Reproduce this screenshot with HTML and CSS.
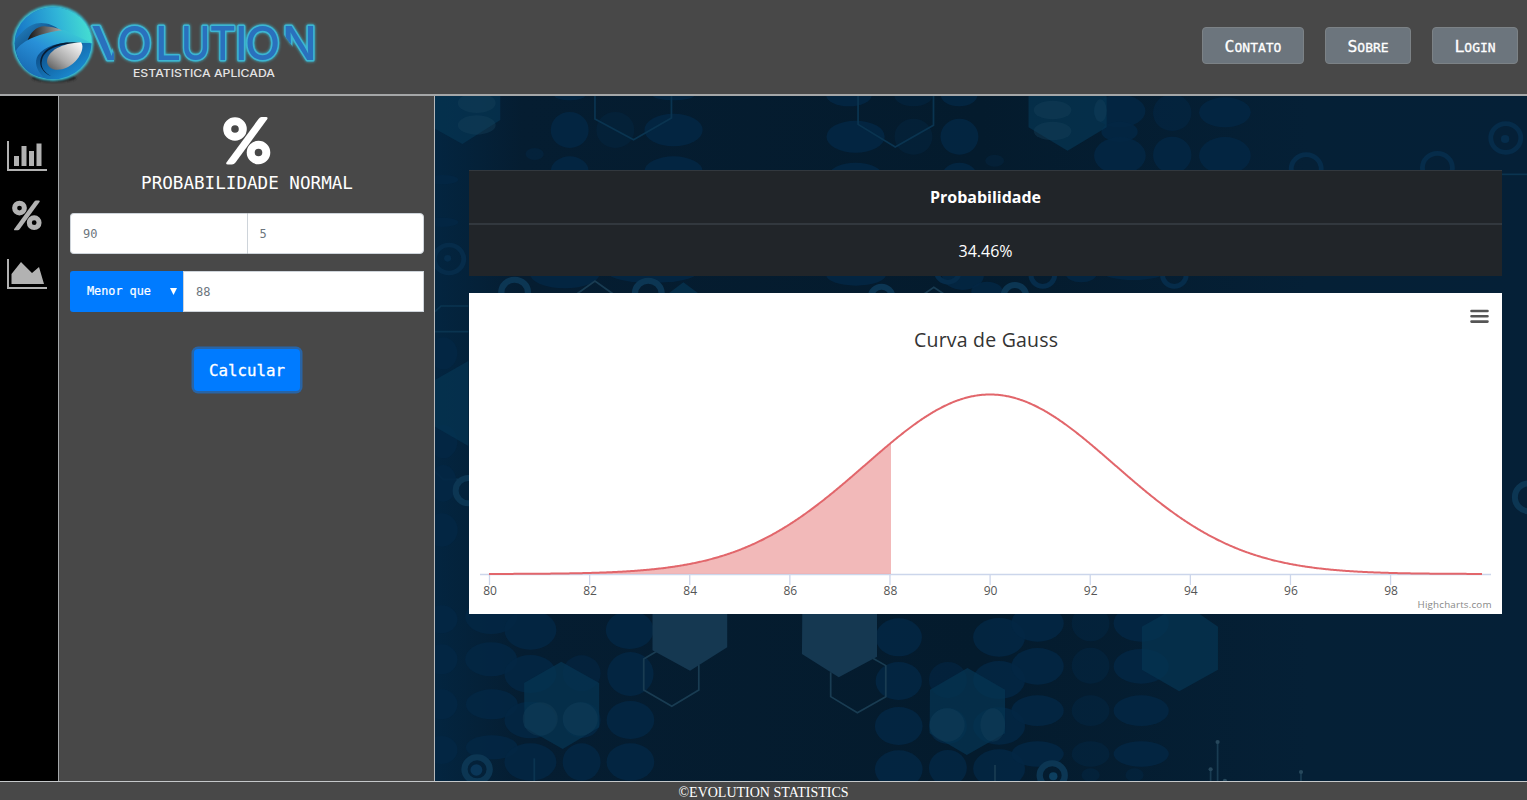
FILE: index.html
```html
<!DOCTYPE html>
<html lang="pt-BR">
<head>
<meta charset="utf-8">
<title>Evolution Statistics</title>
<link rel="stylesheet" href="styles.css">
</head>
<body>
<header class="topbar">
  <svg class="logo" viewBox="0 0 330 94" width="330" height="94">
    <defs>
      <linearGradient id="ballTop" x1="0" y1=".3" x2="1" y2=".2"><stop offset="0" stop-color="#1878c8"/><stop offset=".55" stop-color="#30b4d8"/><stop offset="1" stop-color="#48e4d0"/></linearGradient>
      <linearGradient id="ballLow" x1="0" y1="0" x2=".8" y2="1"><stop offset="0" stop-color="#30a0e0"/><stop offset=".5" stop-color="#0c4a84"/><stop offset="1" stop-color="#1c90d8"/></linearGradient>
      <linearGradient id="band" x1="0" y1="1" x2="1" y2="0"><stop offset="0" stop-color="#1460a8"/><stop offset=".5" stop-color="#2890d8"/><stop offset="1" stop-color="#40dcd4"/></linearGradient>
      <linearGradient id="metal" x1="0" y1="1" x2="1" y2="0"><stop offset="0" stop-color="#555"/><stop offset=".4" stop-color="#aaa"/><stop offset="1" stop-color="#fff"/></linearGradient>
      <linearGradient id="metalTop" x1="0" y1="0" x2="1" y2="0"><stop offset="0" stop-color="#111"/><stop offset="1" stop-color="#bbb"/></linearGradient>
      <filter id="soft" x="-20%" y="-20%" width="140%" height="140%"><feGaussianBlur stdDeviation="1.2"/></filter>
      <clipPath id="clipV"><path d="M86 20h17l11 34v11H86z"/></clipPath>
      <clipPath id="clipN"><path d="M279 20h43v46h-15l-28-38z"/></clipPath>
    </defs>
    <ellipse cx="54" cy="78" rx="22" ry="4" fill="#222" filter="url(#soft)"/>
    <g transform="translate(0 3) scale(1 .935)">
      <circle cx="53" cy="43" r="40.500" fill="#38bfd4" filter="url(#soft)"/>
      <circle cx="53" cy="43" r="38.500" fill="url(#ballLow)"/>
      <path d="M15 43a38.500 38.500 0 0 1 77 0c-10-1-18 0-24 1 0-12-17-26-32-22-10 3-14 10-21 17z" fill="url(#ballTop)"/>
      <path d="M27 42c3-11 10-18 19-17 10 0 17 4 20 8-13 0-27 3-39 9z" fill="url(#metalTop)"/>
      <path d="M16 51c6-11 24-19 48-22l28 14c-24-3-46 0-54 13-4 7-2 16 6 24-15-2-25-13-28-29z" fill="url(#band)"/>
      <path d="M83 43c-20 0-38 4-41 18-2 8 3 14 9 17-14-6-14-22-2-30 10-6 22-7 34-5z" fill="#071c33"/>
      <path d="M47 62c1-11 15-19 34-20 5 7-4 22-14 27-10 5-20 2-20-7z" fill="url(#metal)"/>
    </g>
    <g class="wordmark">
      <g clip-path="url(#clipV)"><text transform="translate(91 60) scale(1.25 1)">V</text></g>
      <text x="117" y="60">O</text>
      <text x="155" y="60">L</text>
      <text transform="translate(181 60) scale(.86 1)">U</text>
      <text transform="translate(209.500 60) scale(.88 1)">T</text>
      <text x="235" y="60">I</text>
      <text x="245" y="60">O</text>
      <g clip-path="url(#clipN)"><text x="282" y="60">N</text></g>
    </g>
    <text class="tagline" x="133" y="76.500" textLength="142" lengthAdjust="spacingAndGlyphs">ESTATISTICA APLICADA</text>
  </svg>
  <nav class="nav">
    <button class="nav-btn">Contato</button>
    <button class="nav-btn">Sobre</button>
    <button class="nav-btn">Login</button>
  </nav>
</header>

<div class="workspace">
  <aside class="rail">
    <svg class="rail-icon" viewBox="0 0 40 31"><path d="M0 0h2v28h38v2H0zM7 15h5v10H7zM14.500 5h5v20h-5zM22 10h5v15h-5zM29.500 2.500h5V25h-5z"/></svg>
    <svg class="rail-icon rail-percent" viewBox="0 0 48 48"><use href="#percent"/></svg>
    <svg class="rail-icon" viewBox="0 0 40 31"><path d="M0 0h2v28h38v2H0zM4.500 15L14 3l11 11 7-6 5 17H4.500z"/></svg>
  </aside>

  <section class="panel">
    <svg class="panel-icon" viewBox="0 0 48 48"><g id="percent"><path d="M38.500 0H43q2.500 0 1 2.500L12.500 45.500Q11 47.500 9 47.500H5q-3 0-1.200-2.500L35.500 2Q37 0 38.500 0z"/><g fill="none" stroke-width="8"><circle cx="12" cy="12" r="7.800"/><circle cx="35.500" cy="35.500" r="7.800"/></g></g></svg>
    <h1 class="panel-title">PROBABILIDADE NORMAL</h1>
    <div class="field-row rounded"><div class="field">90</div><div class="field">5</div></div>
    <div class="field-row"><div class="select">Menor que<svg class="caret" viewBox="0 0 6 6"><path d="M0 0h6L3 6z"/></svg></div><div class="field">88</div></div>
    <button class="calc">Calcular</button>
  </section>

  <main class="results">
    <svg class="backdrop" viewBox="435 96 1092 685" preserveAspectRatio="none">
      <defs>
        <linearGradient id="sea"><stop offset="0" stop-color="#032540"/><stop offset=".08" stop-color="#051d31"/><stop offset=".5" stop-color="#041b2d"/><stop offset=".8" stop-color="#052036"/><stop offset="1" stop-color="#052037"/></linearGradient>
      </defs>
      <path d="M435 96h1092v685H435z" fill="url(#sea)"/>
      <g transform="translate(435 95) scale(.3508 .3333)">
        <g class="dots"><circle cx="384" cy="105" r="54"/><circle cx="514" cy="105" r="54" opacity=".5"/><ellipse cx="680" cy="105" rx="83" ry="49"/><ellipse cx="284" cy="177" rx="26" ry="18" opacity=".6"/><ellipse cx="384" cy="229" rx="54" ry="45"/><ellipse cx="680" cy="229" rx="83" ry="45"/><ellipse cx="384" cy="0" rx="45" ry="16"/><ellipse cx="680" cy="0" rx="60" ry="16"/><ellipse cx="1180" cy="0" rx="65" ry="34"/><ellipse cx="1364" cy="0" rx="55" ry="34" opacity=".6"/><ellipse cx="1494" cy="0" rx="52" ry="34"/><ellipse cx="1199" cy="125" rx="83" ry="48"/><circle cx="1364" cy="125" r="54" opacity=".5"/><circle cx="1495" cy="125" r="54"/><ellipse cx="1199" cy="245" rx="78" ry="42"/><ellipse cx="1495" cy="245" rx="50" ry="42"/><ellipse cx="20" cy="254" rx="46" ry="14"/><ellipse cx="20" cy="382" rx="46" ry="14"/><ellipse cx="370" cy="535" rx="100" ry="45"/><ellipse cx="620" cy="535" rx="125" ry="28"/><ellipse cx="1200" cy="540" rx="85" ry="32"/><ellipse cx="1505" cy="540" rx="60" ry="45"/></g>
        <path class="hex-a" d="M-20 0H186V75L78 147-20 90z"/><g class="haze"><ellipse cx="119" cy="24" rx="54" ry="30"/><ellipse cx="119" cy="90" rx="54" ry="29"/></g>
        <path class="wire" d="M456 0V72L566 134 674 69V0M1206 0V88L1312 156 1421 91V0"/>
        <path class="wire pale" d="M400 600L456 558 512 600M1390 600L1422 577 1455 600"/>
        <path class="hex-a" d="M660 600L708 562 757 600z"/>
        <g class="ring"><circle cx="40" cy="492" r="42"/><circle cx="1462" cy="530" r="32"/></g><g class="ring bright"><circle cx="227" cy="592" r="38"/><circle cx="608" cy="595" r="38"/><circle cx="1273" cy="605" r="30"/></g><circle cx="36" cy="490" r="10" fill="#062d4c"/>
      </g>
      <g transform="translate(980 95) scale(.3489 .3333)">
        <g class="dots"><ellipse cx="400" cy="48" rx="74" ry="49"/><circle cx="551" cy="53" r="55" opacity=".7"/><ellipse cx="702" cy="52" rx="74" ry="45"/><ellipse cx="400" cy="110" rx="52" ry="30"/><ellipse cx="401" cy="182" rx="74" ry="56"/><circle cx="551" cy="180" r="55"/><ellipse cx="702" cy="182" rx="74" ry="56"/><ellipse cx="42" cy="197" rx="27" ry="18" opacity=".5"/><ellipse cx="290" cy="535" rx="45" ry="27"/><ellipse cx="440" cy="535" rx="85" ry="20"/><ellipse cx="20" cy="590" rx="45" ry="30"/></g>
        <path class="hex-a" d="M139 0H363V97L251 167 139 97z"/><g class="haze"><ellipse cx="208" cy="45" rx="54" ry="28"/><ellipse cx="208" cy="108" rx="54" ry="28"/><ellipse cx="345" cy="47" rx="18" ry="34"/></g>
        <g class="ring"><circle cx="1507" cy="129" r="43"/><circle cx="935" cy="222" r="43"/><circle cx="1311" cy="218" r="43"/><circle cx="180" cy="540" r="34"/><circle cx="557" cy="540" r="34"/></g><circle class="ring bright" cx="100" cy="602" r="32"/>
        <circle cx="1505" cy="132" r="12" fill="#062d4c"/><path class="wire" d="M1495 238H1568"/>
      </g>
      <g transform="translate(435 290) scale(.3333)">
        <path class="wire" d="M0 65L18 48H100M0 125H100M0 545L25 568H70"/><g class="dots"><ellipse cx="25" cy="190" rx="42" ry="48"/><ellipse cx="25" cy="580" rx="40" ry="55"/><ellipse cx="25" cy="455" rx="42" ry="50"/><ellipse cx="20" cy="720" rx="48" ry="50"/></g>
        <path class="hex-a" d="M0 270L100 213V468L0 410z"/><circle class="ring bright" cx="100" cy="602" r="38"/><circle class="ring bright" cx="3282" cy="622" r="42"/>
      </g>
      <g transform="translate(435 540) scale(.3508 .3333)">
        <g class="dots"><ellipse cx="160" cy="230" rx="74" ry="52"/><ellipse cx="272" cy="270" rx="74" ry="59"/><ellipse cx="555" cy="270" rx="68" ry="57"/><ellipse cx="160" cy="358" rx="74" ry="51"/><ellipse cx="272" cy="402" rx="74" ry="57"/><circle cx="418" cy="400" r="54" opacity=".7"/><circle cx="557" cy="402" r="66"/><ellipse cx="162" cy="493" rx="74" ry="45"/><ellipse cx="272" cy="540" rx="74" ry="55"/><ellipse cx="418" cy="540" rx="54" ry="54"/><ellipse cx="557" cy="540" rx="68" ry="57"/><ellipse cx="162" cy="622" rx="74" ry="36"/><ellipse cx="272" cy="666" rx="74" ry="56"/><ellipse cx="418" cy="666" rx="54" ry="56"/><ellipse cx="557" cy="666" rx="68" ry="56"/><ellipse cx="18" cy="358" rx="46" ry="45"/><ellipse cx="18" cy="493" rx="46" ry="45"/><ellipse cx="18" cy="630" rx="46" ry="42"/><ellipse cx="18" cy="238" rx="46" ry="42"/>
        <ellipse cx="1322" cy="292" rx="66" ry="57"/><ellipse cx="1322" cy="423" rx="66" ry="57"/><ellipse cx="1322" cy="558" rx="68" ry="57"/><ellipse cx="1322" cy="688" rx="68" ry="57"/><circle cx="1462" cy="420" r="54" opacity=".7"/><circle cx="1462" cy="558" r="54"/><circle cx="1462" cy="684" r="54"/>
        <ellipse cx="1608" cy="292" rx="74" ry="58"/><ellipse cx="1608" cy="420" rx="74" ry="57"/><ellipse cx="1608" cy="558" rx="74" ry="56"/><ellipse cx="1608" cy="686" rx="74" ry="58"/></g>
        <path class="hex-a" d="M254 429L360 365 468 429V562L364 627 255 562zM1411 449L1518 384 1625 449V580L1516 645 1410 580z"/><g class="haze"><circle cx="300" cy="537" r="50"/><circle cx="414" cy="537" r="50"/><circle cx="1460" cy="555" r="50"/><ellipse cx="1590" cy="555" rx="35" ry="50"/></g>
        <path class="wire pale" d="M632 334L595 357V450L675 499 752 450V375M1128 397V470L1204 518 1285 470V377L1247 354"/>
        <path class="hex-b" d="M620 215H833V322L727 392 620 331zM1047 215H1260V350L1151 412 1046 342z"/>
        <circle class="ring bright" cx="120" cy="688" r="36"/><circle cx="118" cy="690" r="17" fill="#0a3658"/><path class="wire" d="M283 655V725"/>
      </g>
      <g transform="translate(980 540) scale(.3489 .3333)">
        <g class="dots"><ellipse cx="165" cy="250" rx="75" ry="55"/><ellipse cx="165" cy="379" rx="75" ry="55"/><ellipse cx="165" cy="512" rx="75" ry="46"/><ellipse cx="165" cy="642" rx="75" ry="38"/><g opacity=".6"><circle cx="317" cy="250" r="54"/><circle cx="317" cy="377" r="54"/><ellipse cx="317" cy="512" rx="54" ry="46"/><ellipse cx="317" cy="642" rx="54" ry="38"/><ellipse cx="317" cy="705" rx="26" ry="20"/><ellipse cx="443" cy="705" rx="26" ry="20"/></g><ellipse cx="462" cy="250" rx="79" ry="55"/><ellipse cx="462" cy="379" rx="79" ry="52"/><ellipse cx="462" cy="512" rx="79" ry="46"/><ellipse cx="462" cy="642" rx="79" ry="38"/></g>
        <path class="hex-a" d="M464 260L540 215H620L682 260V389L571 454 464 389z"/>
        <circle class="ring bright" cx="207" cy="706" r="36"/><circle cx="210" cy="709" r="12" fill="#0d3f5f"/>
        <path class="wire pale" d="M661 690V725M681 607V725M920 697V725M43 675V725"/><g fill="#27485c"><circle cx="661" cy="688" r="6"/><circle cx="681" cy="606" r="6"/><circle cx="702" cy="722" r="6"/><circle cx="920" cy="696" r="6"/></g>
      </g>
    </svg>

    <div class="stack">
      <table class="table">
        <thead><tr><th>Probabilidade</th></tr></thead>
        <tbody><tr><td>34.46%</td></tr></tbody>
      </table>
      <svg class="chart" viewBox="469 293 1033 321" width="1033" height="321">
        <path d="M1471.500 311h16M1471.500 316.300h16M1471.500 321.600h16" stroke="#555" stroke-width="2.600" stroke-linecap="round"/>
        <text class="chart-title" x="914" y="346.500" textLength="144">Curva de Gauss</text>
        <path d="M480 574.500H1491" stroke="#ccd6eb" stroke-width="1.300"/>
        <g id="axis"></g>
        <path id="area" fill="#e57373" fill-opacity=".5"/>
        <path id="curve" fill="none" stroke="#e2666b" stroke-width="2"/>
        <text class="credits" x="1417.500" y="608" textLength="74">Highcharts.com</text>
      </svg>
    </div>
  </main>
</div>

<footer class="footer">©EVOLUTION STATISTICS</footer>
<script src="chart.js"></script>
</body>
</html>
```
FILE: styles.css
```css
* { box-sizing: border-box; }
body {
  margin: 0;
  height: 800px;
  display: flex;
  flex-direction: column;
  overflow: hidden;
  background: #484848;
  font-family: "Open Sans", "Noto Sans", sans-serif;
}
.topbar {
  flex: 0 0 96px;
  display: flex;
  justify-content: space-between;
  align-items: flex-start;
  border-bottom: 2px solid #a5a7a8;
}
.logo { display: block; }
.wordmark {
  font: 500 46px Inter, sans-serif;
  fill: #2a70bd;
  stroke: #3cb6d2;
  stroke-width: 3;
  stroke-linejoin: round;
  paint-order: stroke;
  filter: drop-shadow(0 0 1.500px #3cc4dc);
}
.tagline { font: 500 10px Inter, sans-serif; fill: #e4e4e4; }
.nav { display: flex; gap: 21px; padding: 27px 9px 0 0; }
.nav-btn {
  display: block;
  width: 86px;
  height: 36.500px;
  padding: 2px 0 0;
  border: 1px solid #7c8286;
  border-radius: 4px;
  background: #6c757d;
  color: #fff;
  font: 13px "DejaVu Sans Mono", monospace;
  text-transform: uppercase;
  -webkit-text-stroke: .3px #fff;
}
.nav-btn:first-child { width: 102px; }
.nav-btn::first-letter { font-size: 16.500px; }
.workspace { flex: 1; min-height: 0; display: flex; }
.rail {
  width: 59px;
  padding: 45px 0 0 7px;
  background: #000;
  border-right: 1px solid #a5a8aa;
  display: flex;
  flex-direction: column;
  gap: 28px;
}
.rail-icon { width: 40px; height: 31px; fill: #b2b2b2; stroke: none; }
.rail-percent { width: 30px; margin-left: 5px; stroke: #b2b2b2; }
.rail-percent path, .panel-icon path { stroke: none; }
.panel {
  width: 376px;
  padding: 21px 10px 0 11px;
  display: flex;
  flex-direction: column;
  align-items: center;
  background: #484848;
  border-right: 1px solid #b5b8ba;
  font-family: "DejaVu Sans Mono", monospace;
}
.panel-icon { width: 48px; height: 48px; fill: #fff; stroke: #fff; }
.panel-title {
  margin: 7px 0 18px;
  color: #fff;
  font-size: 17.600px;
  font-weight: 400;
  line-height: 23px;
  white-space: nowrap;
}
.field-row {
  display: flex;
  align-self: stretch;
  height: 41px;
  margin-bottom: 17px;
}
.field {
  flex: 1;
  padding: 0 12px;
  border: 1px solid #ced4da;
  background: #fff;
  color: #6c757d;
  font-size: 12px;
  line-height: 40px;
}
.rounded .field:first-child { border-radius: 4px 0 0 4px; border-right: 0; }
.rounded .field:last-child { border-radius: 0 4px 4px 0; }
.select {
  width: 113px;
  padding: 0 6px 1px 17px;
  display: flex;
  align-items: center;
  justify-content: space-between;
  border-radius: 3px 0 0 3px;
  background: #007bff;
  color: #fff;
  font-size: 11.800px;
  -webkit-text-stroke: .2px #fff;
}
.caret { width: 7px; height: 7px; fill: #fff; }
.calc {
  width: 106px;
  height: 42px;
  margin-top: 20px;
  padding: 0;
  border: 0;
  border-radius: 4px;
  background: #007bff;
  box-shadow: 0 0 0 2.500px #2864a6;
  color: #fff;
  font: 15.800px "DejaVu Sans Mono", monospace;
  -webkit-text-stroke: .3px #fff;
}
.results { position: relative; flex: 1; min-width: 0; padding: 74px 25px 0 34px; }
.backdrop { position: absolute; inset: 0; width: 100%; height: 100%; }
.dots { fill: #042744; fill-opacity: .85; }
.hex-a { fill: #063452; fill-opacity: .75; }
.hex-b { fill: #153851; }
.haze { fill: #164059; fill-opacity: .4; }
.wire { fill: none; stroke: #0a3450; stroke-width: 5; }
.wire.pale { stroke: #193c52; }
.ring { fill: none; stroke: #062c4a; stroke-width: 14; }
.ring.bright { stroke: #0c3653; stroke-width: 18; }
.stack { position: relative; display: flex; flex-direction: column; gap: 17px; }
.table {
  width: 100%;
  border-collapse: separate;
  border-spacing: 0;
  background: #212529;
  color: #fff;
  font-size: 16px;
  text-align: center;
}
.table th { height: 55px; padding: 0; border-top: 1px solid #32383e; border-bottom: 2px solid #32383e; font-weight: 700; }
.table td { height: 51px; padding: 0; }
.chart { display: block; width: 100%; height: 321px; background: #fff; }
.chart-title { font-size: 19.500px; fill: #333; }
.tick { font-size: 12px; fill: #555; text-anchor: middle; }
.credits { font-size: 9.800px; fill: #888; }
.footer {
  flex: 0 0 19px;
  height: 19px;
  min-height: 0;
  border-top: 1px solid #c5c8ca;
  background: #484848;
  color: #fff;
  font: 14px/22px "Liberation Serif", serif;
  text-align: center;
}
```
FILE: chart.js
```js
const mean = 990, sigma = 125, base = 574, peak = 179.5;
const point = x => `${x},${(base - peak * Math.exp(-((x - mean) ** 2) / (2 * sigma * sigma))).toFixed(2)}`;
const range = (from, to) => {
  const points = [];
  for (let x = from; x <= to; x += 1) points.push(point(x));
  return points.join(' L');
};
document.getElementById('curve').setAttribute('d', 'M' + range(489, 1482));
document.getElementById('area').setAttribute('d', `M489,${base} L` + range(489, 891) + ` L891,${base}Z`);

let ticks = '';
for (let v = 80; v <= 98; v += 2) {
  const x = 489.5 + (v - 80) * 50.06;
  ticks += `<path d="M${x} 574V585" stroke="#ccd6eb" stroke-width="1.3"/><text class="tick" x="${x + 0.5}" y="595">${v}</text>`;
}
document.getElementById('axis').innerHTML = ticks;
```
